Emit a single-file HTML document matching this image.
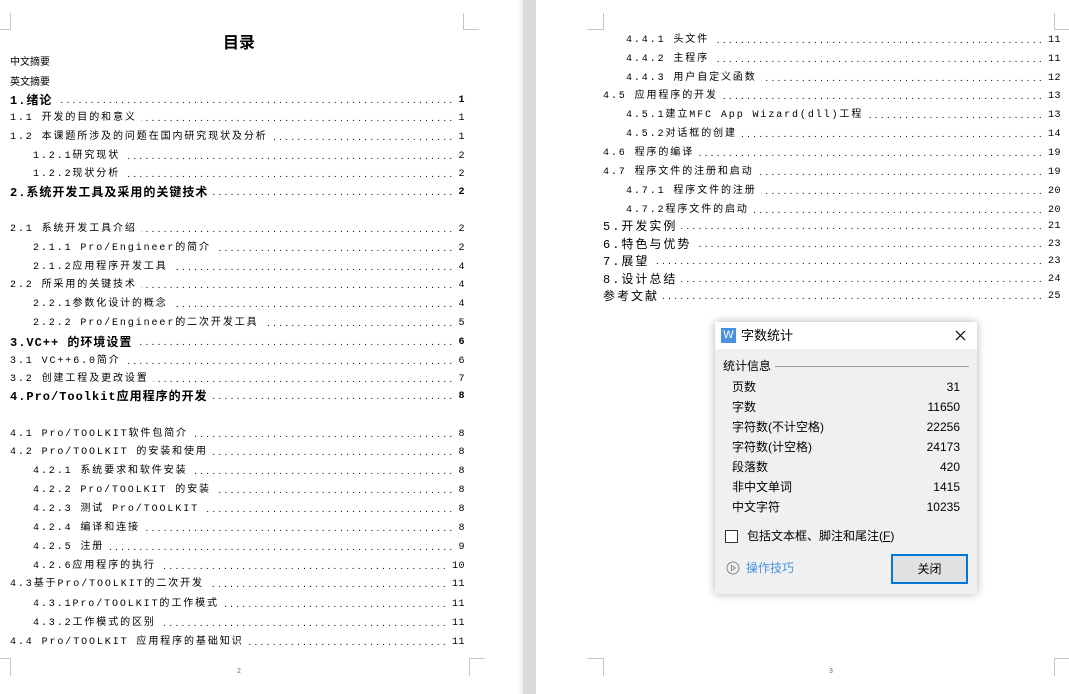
<!DOCTYPE html>
<html><head><meta charset="utf-8"><style>
*{margin:0;padding:0;box-sizing:border-box}
body{width:1069px;height:694px;background:#fff;position:relative;overflow:hidden;font-family:"Liberation Mono","Noto Sans CJK SC",monospace;color:#000}
.gap{position:absolute;left:523px;top:0;width:13px;height:694px;background:#dadbdd}
.gap2{position:absolute;left:517px;top:0;width:6px;height:694px;background:linear-gradient(90deg,#fff,#eee)}
.r{position:absolute;height:14px;line-height:14px;display:flex;font-size:10px;white-space:nowrap}
.r .t{letter-spacing:1.9px;padding-right:4px}
.r .d{flex:1;overflow:hidden;font-family:"Liberation Sans",sans-serif;font-weight:normal;font-size:10px;letter-spacing:3.3px;margin-right:3px;direction:rtl}
.r .n{letter-spacing:0.5px;font-size:10px}
.b{font-weight:bold;font-size:12px}
.b .t{letter-spacing:1px}
.s{font-size:12px}
.s .t{letter-spacing:2px}
.m{position:absolute;background:#c6c6c6}
.pn{position:absolute;font-size:7px;color:#666;font-family:"Liberation Sans",sans-serif}
.dlg{position:absolute;left:715px;top:322px;width:262px;height:272px;background:#f0f0f0;box-shadow:0 0 8px rgba(0,0,0,.3);font-family:"Liberation Sans","Noto Sans CJK SC",sans-serif;font-size:12px;color:#000}
.dlg .tb{height:27px;background:#fff;position:relative}
.dl{position:absolute;left:17px;width:228px;display:flex;justify-content:space-between;font-size:12px;height:16px;line-height:16px}
</style></head><body>
<div class="gap2"></div><div class="gap"></div>
<div class="m" style="left:10px;top:13px;width:1px;height:17px"></div><div class="m" style="left:0;top:29px;width:11px;height:1px"></div>
<div class="m" style="left:463px;top:13px;width:1px;height:17px"></div><div class="m" style="left:463px;top:29px;width:16px;height:1px"></div>
<div class="m" style="left:10px;top:658px;width:1px;height:18px"></div><div class="m" style="left:0;top:658px;width:11px;height:1px"></div>
<div class="m" style="left:469px;top:658px;width:1px;height:18px"></div><div class="m" style="left:469px;top:658px;width:16px;height:1px"></div>
<div class="m" style="left:603px;top:13px;width:1px;height:17px"></div><div class="m" style="left:587px;top:29px;width:17px;height:1px"></div>
<div class="m" style="left:1054px;top:13px;width:1px;height:17px"></div><div class="m" style="left:1054px;top:29px;width:15px;height:1px"></div>
<div class="m" style="left:603px;top:658px;width:1px;height:18px"></div><div class="m" style="left:587px;top:658px;width:17px;height:1px"></div>
<div class="m" style="left:1054px;top:658px;width:1px;height:18px"></div><div class="m" style="left:1054px;top:658px;width:15px;height:1px"></div>
<div class="pn" style="left:237px;top:668px">2</div>
<div class="pn" style="left:829px;top:668px">3</div>

<div style="position:absolute;left:223px;top:31px;font-family:'Noto Sans CJK SC',sans-serif;font-weight:bold;font-size:16px;line-height:20px">目录</div>
<div style="position:absolute;left:10px;top:54px;font-family:'Noto Sans CJK SC',sans-serif;font-size:10px;line-height:14px">中文摘要</div>
<div style="position:absolute;left:10px;top:74px;font-family:'Noto Sans CJK SC',sans-serif;font-size:10px;line-height:14px">英文摘要</div>

<div class="r b" style="left:10px;right:604px;top:94px"><span class="t">1.绪论</span><span class="d">................................................................................................</span><span class="n">1</span></div>
<div class="r" style="left:10px;right:604px;top:112px"><span class="t">1.1 开发的目的和意义</span><span class="d">................................................................................................</span><span class="n">1</span></div>
<div class="r" style="left:10px;right:604px;top:131px"><span class="t">1.2 本课题所涉及的问题在国内研究现状及分析 </span><span class="d">................................................................................................</span><span class="n">1</span></div>
<div class="r" style="left:33px;right:604px;top:150px"><span class="t">1.2.1研究现状 </span><span class="d">................................................................................................</span><span class="n">2</span></div>
<div class="r" style="left:33px;right:604px;top:168px"><span class="t">1.2.2现状分析 </span><span class="d">................................................................................................</span><span class="n">2</span></div>
<div class="r b" style="left:10px;right:604px;top:186px"><span class="t">2.系统开发工具及采用的关键技术 </span><span class="d">................................................................................................</span><span class="n">2</span></div>
<div class="r" style="left:10px;right:604px;top:223px"><span class="t">2.1 系统开发工具介绍 </span><span class="d">................................................................................................</span><span class="n">2</span></div>
<div class="r" style="left:33px;right:604px;top:242px"><span class="t">2.1.1 Pro/Engineer的简介 </span><span class="d">................................................................................................</span><span class="n">2</span></div>
<div class="r" style="left:33px;right:604px;top:261px"><span class="t">2.1.2应用程序开发工具 </span><span class="d">................................................................................................</span><span class="n">4</span></div>
<div class="r" style="left:10px;right:604px;top:279px"><span class="t">2.2 所采用的关键技术 </span><span class="d">................................................................................................</span><span class="n">4</span></div>
<div class="r" style="left:33px;right:604px;top:298px"><span class="t">2.2.1参数化设计的概念 </span><span class="d">................................................................................................</span><span class="n">4</span></div>
<div class="r" style="left:33px;right:604px;top:317px"><span class="t">2.2.2 Pro/Engineer的二次开发工具 </span><span class="d">................................................................................................</span><span class="n">5</span></div>
<div class="r b" style="left:10px;right:604px;top:336px"><span class="t">3.VC++ 的环境设置 </span><span class="d">................................................................................................</span><span class="n">6</span></div>
<div class="r" style="left:10px;right:604px;top:355px"><span class="t">3.1 VC++6.0简介 </span><span class="d">................................................................................................</span><span class="n">6</span></div>
<div class="r" style="left:10px;right:604px;top:373px"><span class="t">3.2 创建工程及更改设置</span><span class="d">................................................................................................</span><span class="n">7</span></div>
<div class="r b" style="left:10px;right:604px;top:390px"><span class="t">4.Pro/Toolkit应用程序的开发 </span><span class="d">................................................................................................</span><span class="n">8</span></div>
<div class="r" style="left:10px;right:604px;top:428px"><span class="t">4.1 Pro/TOOLKIT软件包简介 </span><span class="d">................................................................................................</span><span class="n">8</span></div>
<div class="r" style="left:10px;right:604px;top:446px"><span class="t">4.2 Pro/TOOLKIT 的安装和使用 </span><span class="d">................................................................................................</span><span class="n">8</span></div>
<div class="r" style="left:33px;right:604px;top:465px"><span class="t">4.2.1 系统要求和软件安装 </span><span class="d">................................................................................................</span><span class="n">8</span></div>
<div class="r" style="left:33px;right:604px;top:484px"><span class="t">4.2.2 Pro/TOOLKIT 的安装 </span><span class="d">................................................................................................</span><span class="n">8</span></div>
<div class="r" style="left:33px;right:604px;top:503px"><span class="t">4.2.3 测试 Pro/TOOLKIT </span><span class="d">................................................................................................</span><span class="n">8</span></div>
<div class="r" style="left:33px;right:604px;top:522px"><span class="t">4.2.4 编译和连接 </span><span class="d">................................................................................................</span><span class="n">8</span></div>
<div class="r" style="left:33px;right:604px;top:541px"><span class="t">4.2.5 注册 </span><span class="d">................................................................................................</span><span class="n">9</span></div>
<div class="r" style="left:33px;right:604px;top:560px"><span class="t">4.2.6应用程序的执行 </span><span class="d">................................................................................................</span><span class="n">10</span></div>
<div class="r" style="left:10px;right:604px;top:578px"><span class="t">4.3基于Pro/TOOLKIT的二次开发 </span><span class="d">................................................................................................</span><span class="n">11</span></div>
<div class="r" style="left:33px;right:604px;top:598px"><span class="t">4.3.1Pro/TOOLKIT的工作模式 </span><span class="d">................................................................................................</span><span class="n">11</span></div>
<div class="r" style="left:33px;right:604px;top:617px"><span class="t">4.3.2工作模式的区别 </span><span class="d">................................................................................................</span><span class="n">11</span></div>
<div class="r" style="left:10px;right:604px;top:636px"><span class="t">4.4 Pro/TOOLKIT 应用程序的基础知识 </span><span class="d">................................................................................................</span><span class="n">11</span></div>

<div class="r" style="left:626px;right:8px;top:34px"><span class="t">4.4.1 头文件 </span><span class="d">................................................................................................</span><span class="n">11</span></div>
<div class="r" style="left:626px;right:8px;top:53px"><span class="t">4.4.2 主程序 </span><span class="d">................................................................................................</span><span class="n">11</span></div>
<div class="r" style="left:626px;right:8px;top:72px"><span class="t">4.4.3 用户自定义函数 </span><span class="d">................................................................................................</span><span class="n">12</span></div>
<div class="r" style="left:603px;right:8px;top:90px"><span class="t">4.5 应用程序的开发 </span><span class="d">................................................................................................</span><span class="n">13</span></div>
<div class="r" style="left:626px;right:8px;top:109px"><span class="t">4.5.1建立MFC App Wizard(dll)工程 </span><span class="d">................................................................................................</span><span class="n">13</span></div>
<div class="r" style="left:626px;right:8px;top:128px"><span class="t">4.5.2对话框的创建 </span><span class="d">................................................................................................</span><span class="n">14</span></div>
<div class="r" style="left:603px;right:8px;top:147px"><span class="t">4.6 程序的编译 </span><span class="d">................................................................................................</span><span class="n">19</span></div>
<div class="r" style="left:603px;right:8px;top:166px"><span class="t">4.7 程序文件的注册和启动 </span><span class="d">................................................................................................</span><span class="n">19</span></div>
<div class="r" style="left:626px;right:8px;top:185px"><span class="t">4.7.1 程序文件的注册 </span><span class="d">................................................................................................</span><span class="n">20</span></div>
<div class="r" style="left:626px;right:8px;top:204px"><span class="t">4.7.2程序文件的启动 </span><span class="d">................................................................................................</span><span class="n">20</span></div>
<div class="r s" style="left:603px;right:8px;top:220px"><span class="t">5.开发实例 </span><span class="d">................................................................................................</span><span class="n">21</span></div>
<div class="r s" style="left:603px;right:8px;top:238px"><span class="t">6.特色与优势 </span><span class="d">................................................................................................</span><span class="n">23</span></div>
<div class="r s" style="left:603px;right:8px;top:255px"><span class="t">7.展望 </span><span class="d">................................................................................................</span><span class="n">23</span></div>
<div class="r s" style="left:603px;right:8px;top:273px"><span class="t">8.设计总结 </span><span class="d">................................................................................................</span><span class="n">24</span></div>
<div class="r s" style="left:603px;right:8px;top:290px"><span class="t">参考文献 </span><span class="d">................................................................................................</span><span class="n">25</span></div>

<div class="dlg">
 <div class="tb">
  <div style="position:absolute;left:6px;top:6px;width:15px;height:15px;background:#4a90e2;color:#fff;font-size:11px;line-height:15px;text-align:center">W</div>
  <div style="position:absolute;left:26px;top:5px;font-size:13px;line-height:17px">字数统计</div>
  <svg style="position:absolute;left:240px;top:8px" width="11" height="11"><path d="M1 1L10 10M10 1L1 10" stroke="#000" stroke-width="1.2"/></svg>
 </div>
 <div style="position:absolute;left:8px;top:36px;line-height:16px">统计信息</div>
 <div style="position:absolute;left:60px;top:44px;width:194px;height:1px;background:#a0a0a0"></div>
 <div class="dl" style="top:57px"><span>页数</span><span>31</span></div>
 <div class="dl" style="top:77px"><span>字数</span><span>11650</span></div>
 <div class="dl" style="top:97px"><span>字符数(不计空格)</span><span>22256</span></div>
 <div class="dl" style="top:117px"><span>字符数(计空格)</span><span>24173</span></div>
 <div class="dl" style="top:137px"><span>段落数</span><span>420</span></div>
 <div class="dl" style="top:157px"><span>非中文单词</span><span>1415</span></div>
 <div class="dl" style="top:177px"><span>中文字符</span><span>10235</span></div>
 <div style="position:absolute;left:10px;top:208px;width:13px;height:13px;border:1px solid #333;background:#fff"></div>
 <div style="position:absolute;left:32px;top:206px;line-height:16px">包括文本框、脚注和尾注(<u>F</u>)</div>
 <svg style="position:absolute;left:11px;top:239px" width="14" height="14"><circle cx="7" cy="7" r="6" fill="none" stroke="#888" stroke-width="1"/><path d="M5.5 4.5L9.5 7L5.5 9.5Z" fill="none" stroke="#888"/></svg>
 <div style="position:absolute;left:31px;top:238px;line-height:16px;color:#4a90e2">操作技巧</div>
 <div style="position:absolute;left:176px;top:232px;width:77px;height:30px;border:2px solid #0078d7;background:#e1e1e1;text-align:center;line-height:26px">关闭</div>
</div>
</body></html>
